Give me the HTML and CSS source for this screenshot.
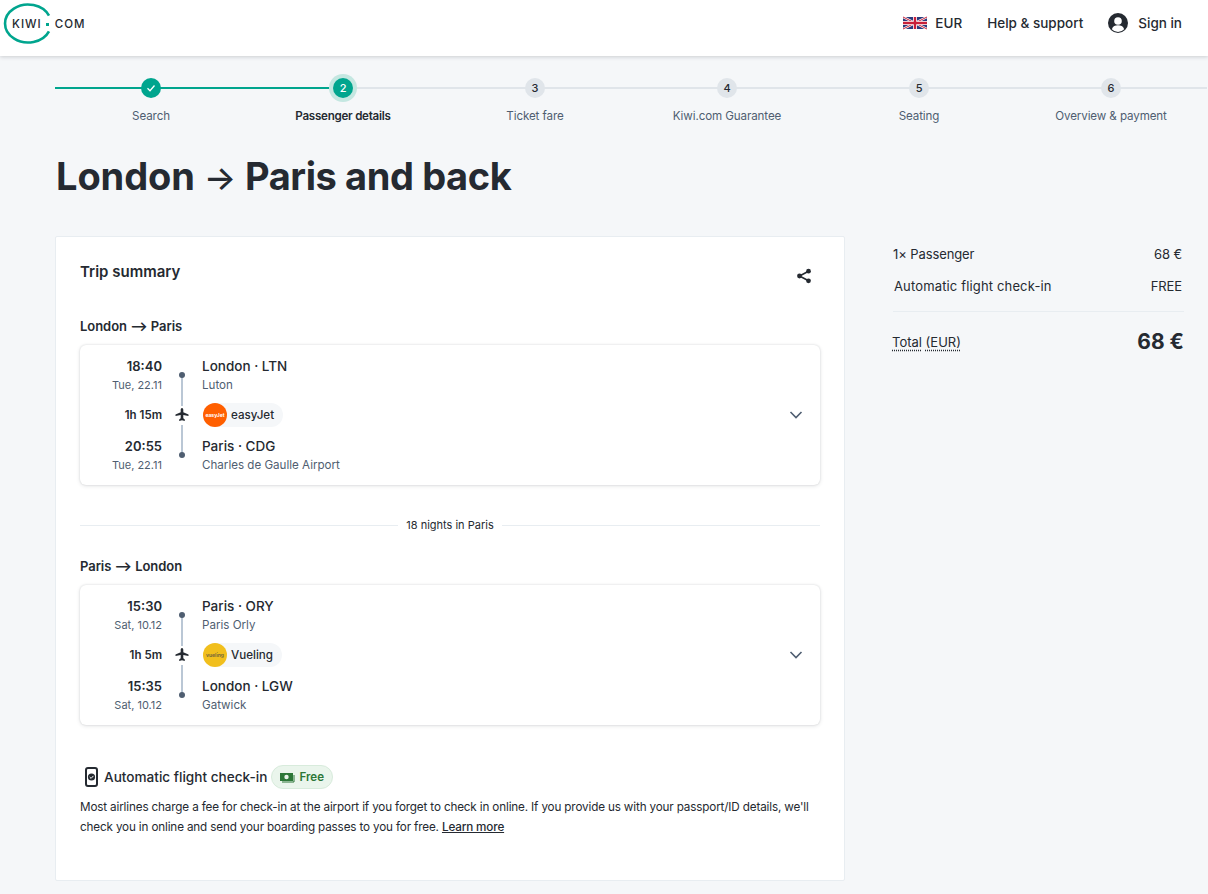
FILE: index.html
```html
<!DOCTYPE html>
<html lang="en">
<head>
<meta charset="utf-8">
<title>Kiwi.com</title>
<link rel="stylesheet" href="styles.css">
</head>
<body>
<header class="topbar">
  <a class="logo">
    <svg class="logo-ring" width="50" height="44" viewBox="0 0 50 44"><path d="M48 15.700A23 19 0 1 0 48 31.300" fill="none" stroke="#00a58e" stroke-width="2.600"/></svg>
    <span class="logo-text">KIWI</span><span class="logo-dot"></span><span class="logo-text">COM</span>
  </a>
  <nav class="topnav">
    <span class="nav-item">
      <svg class="flag" width="24" height="13" viewBox="0 0 60 30"><rect width="60" height="30" fill="#2a3a7c"/><path d="M0 0L60 30M60 0L0 30" stroke="#fff" stroke-width="6"/><path d="M0 0L60 30M60 0L0 30" stroke="#c8203a" stroke-width="2.500"/><path d="M30 0V30M0 15H60" stroke="#fff" stroke-width="10"/><path d="M30 0V30M0 15H60" stroke="#c8203a" stroke-width="6"/></svg>
      EUR
    </span>
    <span class="nav-item">Help &amp; support</span>
    <span class="nav-item signin">
      <svg width="20" height="20" viewBox="0 0 20 20"><circle cx="10" cy="10" r="10" fill="#252a31"/><circle cx="10" cy="8" r="3.800" fill="#fff"/><path d="M3.800 16.200c1-3 3.400-3.900 6.200-3.900s5.200.9 6.200 3.900A8.500 8.500 0 0 1 3.800 16.200z" fill="#fff"/></svg>
      Sign in
    </span>
  </nav>
</header>

<main class="page">
  <ol class="steps">
    <li class="step done"><span class="dot"><svg width="10" height="10" viewBox="0 0 10 10"><path d="M1.500 5.300L4 7.700L8.500 2.500" fill="none" stroke="#fff" stroke-width="1.300"/></svg></span><span class="label">Search</span></li>
    <li class="step active"><span class="dot">2</span><span class="label">Passenger details</span></li>
    <li class="step"><span class="dot">3</span><span class="label">Ticket fare</span></li>
    <li class="step"><span class="dot">4</span><span class="label">Kiwi.com Guarantee</span></li>
    <li class="step"><span class="dot">5</span><span class="label">Seating</span></li>
    <li class="step"><span class="dot">6</span><span class="label">Overview &amp; payment</span></li>
  </ol>

  <h1 class="title">London <span class="title-arrow">→</span> <span class="title-rest">Paris and back</span></h1>

  <div class="columns">
    <section class="summary">
      <div class="summary-head">
        <h2>Trip summary</h2>
        <svg class="share" width="16" height="16" viewBox="0 0 16 16"><circle cx="12.500" cy="3.200" r="2.400" fill="#252a31"/><circle cx="12.500" cy="12.800" r="2.400" fill="#252a31"/><circle cx="3.500" cy="8" r="2.400" fill="#252a31"/><path d="M12.500 3.200L3.500 8L12.500 12.800" fill="none" stroke="#252a31" stroke-width="1.600"/></svg>
      </div>

      <h3 class="leg-title">London <span class="arrow">⟶</span> Paris</h3>
      <article class="flight">
        <div class="row">
          <div class="when"><strong>18:40</strong><small>Tue, 22.11</small></div>
          <div class="track"></div>
          <div class="where"><strong>London · LTN</strong><small>Luton</small></div>
        </div>
        <div class="row mid">
          <div class="when"><b>1h 15m</b></div>
          <div class="track plane"><svg width="14" height="14" viewBox="0 0 14 14"><path d="M7 0C6 0 5.700 1 5.700 2v2.300L.5 6.500V8l5.200-1.100v3.400L4.200 11.500V13L7 12.300 9.800 13v-1.500L8.300 10.300V6.900L13.500 8V6.500L8.300 4.300V2C8.300 1 8 0 7 0z" fill="#252a31"/></svg></div>
          <div class="where"><span class="carrier"><span class="badge ej">easyJet</span>easyJet</span></div>
        </div>
        <div class="row last">
          <div class="when"><strong>20:55</strong><small>Tue, 22.11</small></div>
          <div class="track"></div>
          <div class="where"><strong>Paris · CDG</strong><small>Charles de Gaulle Airport</small></div>
        </div>
        <svg class="chevron" width="14" height="8" viewBox="0 0 14 8"><path d="M1.500 1L7 6.500L12.500 1" fill="none" stroke="#4f5e71" stroke-width="1.600"/></svg>
      </article>

      <div class="nights"><span>18 nights in Paris</span></div>

      <h3 class="leg-title">Paris <span class="arrow">⟶</span> London</h3>
      <article class="flight">
        <div class="row">
          <div class="when"><strong>15:30</strong><small>Sat, 10.12</small></div>
          <div class="track"></div>
          <div class="where"><strong>Paris · ORY</strong><small>Paris Orly</small></div>
        </div>
        <div class="row mid">
          <div class="when"><b>1h 5m</b></div>
          <div class="track plane"><svg width="14" height="14" viewBox="0 0 14 14"><path d="M7 0C6 0 5.700 1 5.700 2v2.300L.5 6.500V8l5.200-1.100v3.400L4.200 11.500V13L7 12.300 9.800 13v-1.500L8.300 10.300V6.900L13.500 8V6.500L8.300 4.300V2C8.300 1 8 0 7 0z" fill="#252a31"/></svg></div>
          <div class="where"><span class="carrier"><span class="badge vy">vueling</span>Vueling</span></div>
        </div>
        <div class="row last">
          <div class="when"><strong>15:35</strong><small>Sat, 10.12</small></div>
          <div class="track"></div>
          <div class="where"><strong>London · LGW</strong><small>Gatwick</small></div>
        </div>
        <svg class="chevron" width="14" height="8" viewBox="0 0 14 8"><path d="M1.500 1L7 6.500L12.500 1" fill="none" stroke="#4f5e71" stroke-width="1.600"/></svg>
      </article>

      <div class="checkin-head">
        <svg class="phone" width="13" height="20" viewBox="0 0 13 20"><rect x="1" y="1" width="11" height="18" rx="2" fill="#fff" stroke="#252a31" stroke-width="2"/><circle cx="6.500" cy="10" r="3.600" fill="#252a31"/><path d="M4.700 10l1.400 1.400L8.400 8.900" fill="none" stroke="#fff" stroke-width="1"/></svg>
        <h3>Automatic flight check-in</h3>
        <span class="free"><svg width="15" height="11" viewBox="0 0 15 11"><rect x="0" y="1" width="13" height="8" fill="#2d7738"/><circle cx="6.500" cy="5" r="2.200" fill="#e8f4ea"/><path d="M14 3V10H2" fill="none" stroke="#2d7738" stroke-width="1"/></svg>Free</span>
      </div>
      <p class="checkin-text">Most airlines charge a fee for check-in at the airport if you forget to check in online. If you provide us with your passport/ID details, we'll check you in online and send your boarding passes to you for free. <a>Learn more</a></p>
    </section>

    <aside class="price">
      <div class="price-row"><span>1× Passenger</span><span>68 €</span></div>
      <div class="price-row wide"><span>Automatic flight check-in</span><span>FREE</span></div>
      <div class="total"><span class="total-label"><u>Total</u> <u>(EUR)</u></span><strong>68 €</strong></div>
    </aside>
  </div>
</main>
</body>
</html>
```

FILE: styles.css
```css
* { box-sizing: border-box; }
html, body { margin: 0; padding: 0; }
body {
  background: #f5f7f9;
  color: #252a31;
  font-family: "Inter", "Liberation Sans", sans-serif;
  font-size: 13px;
  height: 894px;
  overflow: hidden;
}
.topbar {
  height: 56px;
  background: #fff;
  box-shadow: 0 1px 4px rgba(37, 42, 49, .2);
  display: flex;
  justify-content: space-between;
  align-items: center;
  padding: 0 26px 0 12px;
  position: relative;
}
.logo { display: flex; align-items: center; position: relative; height: 44px; margin-top: -8px; }
.logo-ring { position: absolute; left: -11px; top: -2px; }
.logo-text { font-size: 11.500px; font-weight: 500; letter-spacing: 1px; position: relative; }
.logo-dot { width: 3px; height: 3px; background: #00a58e; margin: 0 6px 0 4px; }
.topnav { display: flex; align-items: center; gap: 25px; margin-top: -10px; }
.nav-item { display: flex; align-items: center; gap: 8px; font-size: 13.500px; font-weight: 500; }
.signin { gap: 10px; }
.flag { display: block; height: 14px; }

.page { padding-left: 55px; }
.steps { list-style: none; margin: 0; padding: 20px 0 0; display: grid; grid-template-columns: repeat(6, 192px); }
.step { display: flex; flex-direction: column; align-items: center; position: relative; height: 52px; color: #4f5e71; font-size: 11.600px; letter-spacing: -.1px; }
.step::before { content: ""; position: absolute; left: 0; right: 0; top: 11px; height: 2px; background: #e0e5ea; }
.step.done::before { background: #00a58e; }
.step.active::before { background: linear-gradient(90deg, #00a58e 50%, #e0e5ea 50%); }
.dot { width: 20px; height: 20px; border-radius: 50%; background: #e0e5ea; color: #252a31; font-size: 11px; font-weight: 500; display: flex; align-items: center; justify-content: center; position: relative; margin-top: 2px; }
.done .dot, .active .dot { background: #00a58e; color: #fff; }
.active .dot { box-shadow: 0 0 0 4px #c4e7e1; }
.label { margin-top: 10px; line-height: 17px; }
.active .label { color: #252a31; font-weight: 600; letter-spacing: -.25px; }

.title { margin: 0; height: 72px; font-size: 38px; line-height: 48px; font-weight: 700; padding: 24px 0 0 1px; letter-spacing: -.1px; }
.title-arrow { font-size: 34px; font-weight: 500; line-height: 1; }
.title-rest { letter-spacing: -.4px; }

.columns { display: flex; margin-top: 36px; align-items: flex-start; }
.summary { width: 790px; height: 645px; background: #fff; border: 1px solid #e8edf1; border-radius: 2px; padding: 24px; }
.summary-head { display: flex; justify-content: space-between; align-items: flex-start; height: 56px; }
.summary-head h2 { margin: 0; font-size: 15px; line-height: 22px; font-weight: 600; }
.share { margin: 7px 8px 0 0; }
.leg-title { margin: 0 0 10px; height: 18px; font-size: 13px; line-height: 18px; font-weight: 600; letter-spacing: -.05px; }
.arrow { font-weight: 700; line-height: 1; }
.flight { position: relative; height: 140px; background: #fff; border-radius: 6px; box-shadow: 0 0 2px rgba(37,42,49,.16), 0 1px 4px rgba(37,42,49,.12); padding: 11px 0 0; }
.row { display: flex; height: 40px; }
.mid { height: 38px; margin-bottom: 2px; align-items: center; }
.when { width: 82px; text-align: right; display: flex; flex-direction: column; align-items: flex-end; }
.when strong, .where strong { font-size: 13.500px; line-height: 20px; font-weight: 500; }
.when strong { font-weight: 600; font-size: 13px; }
.when small, .where small { line-height: 18px; color: #4f5e71; font-weight: 400; }
.where small { font-size: 11.600px; }
.when small { font-size: 11px; }
.when b { font-size: 11.500px; font-weight: 600; }
.where { display: flex; flex-direction: column; align-items: flex-start; }
.track { width: 40px; position: relative; }
.row .track::before { content: ""; position: absolute; left: 19px; top: 18px; bottom: -10px; width: 2px; background: #bac7d5; }
.row .track::after { content: ""; position: absolute; left: 17px; top: 16px; width: 6px; height: 6px; border-radius: 50%; background: #4f5e71; }
.row.last .track::before { top: -11px; bottom: 21px; }
.row .plane::before, .row .plane::after { display: none; }
.plane { display: flex; align-items: center; justify-content: center; height: 18px; background: #fff; z-index: 1; }
.carrier { display: inline-flex; align-items: center; gap: 4px; height: 24px; padding-right: 9px; border-radius: 12px; background: #f5f7f9; font-size: 11.600px; font-weight: 500; margin-left: 1px; }
.badge { width: 24px; height: 24px; border-radius: 50%; display: flex; align-items: center; justify-content: center; font-size: 5px; font-weight: 700; overflow: hidden; }
.ej { background: #ff5f00; color: #fff; }
.vy { background: #f1bf1d; color: #7a6b3a; }
.chevron { position: absolute; right: 17px; top: 66px; }
.nights { position: relative; height: 72px; padding-top: 8px; display: flex; align-items: center; justify-content: center; font-size: 11px; }
.nights::before { content: ""; position: absolute; left: 0; right: 0; top: 40px; height: 1px; background: #e8edf1; }
.nights span { background: #fff; padding: 0 8px; position: relative; }
.checkin-head { display: flex; align-items: center; gap: 6px; margin-top: 40px; height: 24px; padding-left: 5px; }
.checkin-head h3 { margin: 0 -2px 0 0; font-size: 13.600px; font-weight: 500; }
.free { display: inline-flex; align-items: center; gap: 4px; height: 24px; padding: 0 8px 0 8px; border-radius: 12px; background: #eaf5ec; border: 1px solid #d8ebdc; color: #2d7738; font-size: 11.600px; font-weight: 600; }
.checkin-text { margin: 8px 0 0; font-size: 11.700px; line-height: 20px; letter-spacing: -.15px; }
.checkin-text a { font-weight: 500; text-decoration: underline; }

.price { width: 291px; margin-left: 48px; padding-top: 8px; }
.price-row { display: flex; justify-content: space-between; font-size: 13px; line-height: 20px; margin-bottom: 12px; padding-right: 2px; letter-spacing: -.1px; }
.price-row.wide span:first-child { letter-spacing: .15px; padding-left: 1px; }
.total { border-top: 1px solid #e8edf1; margin-top: 15px; padding-top: 18px; display: flex; justify-content: space-between; align-items: center; font-size: 13px; }
.total-label { margin-left: -1px; }
.total-label u { text-decoration: underline dotted; text-underline-offset: 3px; }
.total strong { font-size: 21px; font-weight: 700; line-height: 24px; }
```
